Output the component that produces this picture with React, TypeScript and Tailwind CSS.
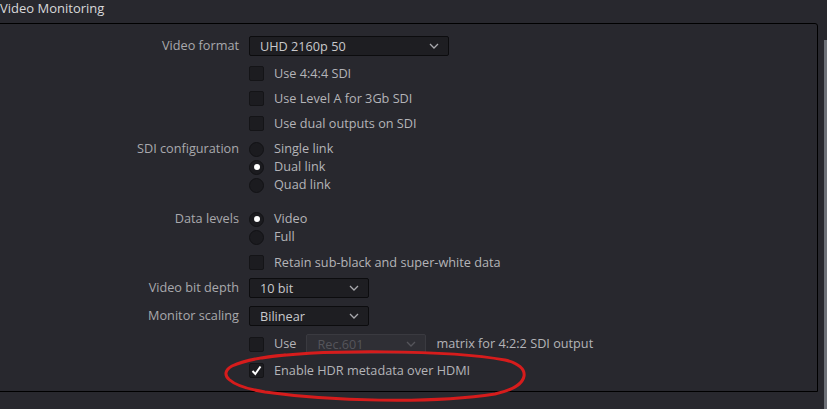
import React from 'react';

const font = { fontFamily: '"Open Sans", "Noto Sans", sans-serif' };

function Chevron({ color = '#a9a9ad' }: { color?: string }) {
  return (
    <svg width="10" height="6" viewBox="0 0 10 6" fill="none">
      <path d="M1 1l4 4 4-4" stroke={color} strokeWidth="1.3" />
    </svg>
  );
}

function Select({ value, width, disabled }: { value: string; width: string; disabled?: boolean }) {
  return (
    <div
      className={`flex h-[20px] items-center justify-between rounded-[2px] border pl-[10px] pr-[9px] text-[12.7px] ${width} ${
        disabled ? 'border-[#3a3a40] bg-[#2f2f35] text-[#55555b]' : 'border-[#0c0c0e] bg-[#1e1e22] text-[#c9c9cc]'
      }`}
    >
      <span className="leading-none">{value}</span>
      <Chevron color={disabled ? '#55555b' : '#a9a9ad'} />
    </div>
  );
}

function Check({ checked }: { checked?: boolean }) {
  return (
    <div className="flex h-[15px] w-[15px] shrink-0 items-center justify-center rounded-[2px] border border-[#141417] bg-[#1c1c20]">
      {checked && (
        <svg width="11" height="11" viewBox="0 0 11 11" fill="none">
          <path d="M1.5 6l2.8 3L9.5 1.5" stroke="#ffffff" strokeWidth="2" />
        </svg>
      )}
    </div>
  );
}

function Radio({ on }: { on?: boolean }) {
  return (
    <div className="flex h-[15px] w-[15px] shrink-0 items-center justify-center rounded-full border border-[#121215] bg-[#1b1b1f]">
      {on && <div className="h-[6px] w-[6px] rounded-full bg-white" />}
    </div>
  );
}

function Row({ label, children, className = '' }: { label?: string; children: React.ReactNode; className?: string }) {
  return (
    <div className={`flex items-center ${className}`}>
      <div className="w-[240px] shrink-0 text-right text-[12.7px] text-[#a9a9ad]">{label}</div>
      <div className="ml-[10px] flex items-center gap-[10px]">{children}</div>
    </div>
  );
}

function Opt({ children }: { children: React.ReactNode }) {
  return <span className="text-[12.7px] text-[#b4b4b8]">{children}</span>;
}

export default function App() {
  return (
    <div className="relative h-[409px] w-[827px] overflow-hidden bg-[#28282e]" style={font}>
      <div className="h-[23px] text-[13px] leading-[16px] text-[#d8d8da]">Video Monitoring</div>

      <div className="ml-[-2px] h-[369px] w-[820px] rounded-tr-[3px] border border-black">
        <Row label="Video format" className="mt-[12px] h-[20px]">
          <Select value="UHD 2160p 50" width="w-[200px]" />
        </Row>
        <Row className="mt-[5px] h-[25px]">
          <Check />
          <Opt>Use 4:4:4 SDI</Opt>
        </Row>
        <Row className="h-[25px]">
          <Check />
          <Opt>Use Level A for 3Gb SDI</Opt>
        </Row>
        <Row className="h-[25px]">
          <Check />
          <Opt>Use dual outputs on SDI</Opt>
        </Row>

        <div className="mt-[4px] flex">
          <div className="flex h-[18px] w-[240px] items-center justify-end text-[12.7px] text-[#a9a9ad]">SDI configuration</div>
          <div className="ml-[10px] flex flex-col">
            <div className="flex h-[18px] items-center gap-[10px]"><Radio /><Opt>Single link</Opt></div>
            <div className="flex h-[18px] items-center gap-[10px]"><Radio on /><Opt>Dual link</Opt></div>
            <div className="flex h-[18px] items-center gap-[10px]"><Radio /><Opt>Quad link</Opt></div>
          </div>
        </div>

        <div className="mt-[16px] flex">
          <div className="flex h-[18px] w-[240px] items-center justify-end text-[12.7px] text-[#a9a9ad]">Data levels</div>
          <div className="ml-[10px] flex flex-col">
            <div className="flex h-[18px] items-center gap-[10px]"><Radio on /><Opt>Video</Opt></div>
            <div className="flex h-[18px] items-center gap-[10px]"><Radio /><Opt>Full</Opt></div>
          </div>
        </div>

        <Row className="mt-[4px] h-[25px]">
          <Check />
          <Opt>Retain sub-black and super-white data</Opt>
        </Row>

        <Row label="Video bit depth" className="mt-[3px] h-[20px]">
          <Select value="10 bit" width="w-[120px]" />
        </Row>
        <Row label="Monitor scaling" className="mt-[8px] h-[20px]">
          <Select value="Bilinear" width="w-[120px]" />
        </Row>
        <Row className="mt-[8px] h-[20px]">
          <Check />
          <Opt>Use</Opt>
          <Select value="Rec.601" width="w-[120px]" disabled />
          <Opt>matrix for 4:2:2 SDI output</Opt>
        </Row>
        <Row className="mt-[7px] h-[20px]">
          <Check checked />
          <Opt>Enable HDR metadata over HDMI</Opt>
        </Row>
      </div>

      <div className="absolute right-0 top-[40px] h-[369px] w-[3px] bg-[#6d7077]" />

      <svg className="pointer-events-none absolute left-0 top-0" width="827" height="409" fill="none">
        <path
          d="M262 358 C320 349 450 350 505 360 C532 366 532 386 495 394 C430 404 330 401 265 392 C228 386 218 374 232 366 C245 360 262 357 285 355"
          stroke="#d61c1c"
          strokeWidth="3"
          strokeLinecap="round"
        />
      </svg>
    </div>
  );
}
